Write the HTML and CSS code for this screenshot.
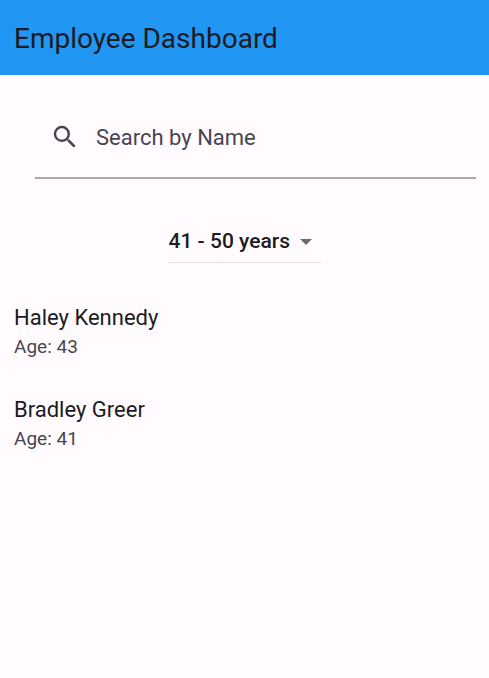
FILE: index.html
```html
<!DOCTYPE html>
<html lang="en">
<head>
<meta charset="utf-8">
<meta name="viewport" content="width=device-width, initial-scale=1">
<title>Employee Dashboard</title>
<link rel="stylesheet" href="styles.css">
</head>
<body>
<header class="app-bar"><h1 class="app-title">Employee Dashboard</h1></header>
<main>
<div class="search">
<svg class="search-icon" viewBox="0 0 24 24" aria-hidden="true"><path d="M15.5 14h-.79l-.28-.27A6.471 6.471 0 0 0 16 9.500 6.500 6.500 0 1 0 9.500 16c1.610 0 3.090-.59 4.230-1.570l.27.28v.79l5 4.990L20.490 19l-4.990-5zm-6 0C7.010 14 5 11.990 5 9.500S7.010 5 9.500 5 14 7.010 14 9.500 11.990 14 9.500 14z"/></svg>
<input class="search-input" type="text" placeholder="Search by Name" aria-label="Search by Name">
</div>
<div class="filter">
<select class="filter-select" aria-label="Age range"><option>41 - 50 years</option></select>
<svg class="filter-arrow" viewBox="0 0 12 6" aria-hidden="true"><path d="M0 0h12L6 6z"/></svg>
</div>
<ul class="employees">
<li class="employee"><span class="name">Haley Kennedy</span><span class="age">Age: 43</span></li>
<li class="employee"><span class="name">Bradley Greer</span><span class="age">Age: 41</span></li>
</ul>
</main>
</body>
</html>
```
FILE: styles.css
```css
* { box-sizing: border-box; }
body {
  margin: 0;
  background: #fffbff;
  color: #1c1b1f;
  font-family: Roboto, sans-serif;
}
.app-bar {
  display: flex;
  align-items: center;
  padding: 21px 14px 18px;
  background: #2196f3;
}
.app-title {
  margin: 0;
  font-size: 28px;
  font-weight: 400;
  line-height: 36px;
}
.search {
  display: flex;
  align-items: center;
  gap: 16px;
  margin: 20px 13px 0 35px;
  padding: 12px 0 10px 15px;
  border-bottom: 2px solid #aba7ad;
}
.search-icon {
  flex: none;
  width: 30px;
  height: 30px;
  fill: #49454f;
}
.search-input {
  flex: 1;
  min-width: 0;
  height: 60px;
  padding: 0;
  border: 0;
  outline: 0;
  background: transparent;
  color: #1c1b1f;
  font: 400 22px/30px Roboto, sans-serif;
}
.search-input::placeholder { color: #49454f; opacity: 1; }
.filter {
  display: flex;
  align-items: center;
  width: fit-content;
  margin: 41px auto 0;
  border-bottom: 1px solid #e4e0e4;
}
.filter-select {
  appearance: none;
  height: 42px;
  margin-right: -24px;
  padding: 0 33px 0 0;
  border: 0;
  background: transparent;
  color: #1c1b1f;
  font: 500 21px/30px Roboto, sans-serif;
}
.filter-arrow {
  width: 12px;
  height: 6px;
  margin: 2px 9px 0 0;
  fill: #6b696d;
  pointer-events: none;
}
.employees {
  margin: 31px 0 0;
  padding: 0 14px;
  list-style: none;
}
.employee {
  display: flex;
  flex-direction: column;
  padding: 8px 0 26px;
}
.name {
  font-size: 22px;
  line-height: 32px;
}
.age {
  color: #49454f;
  font-size: 19px;
  line-height: 26px;
}
```
